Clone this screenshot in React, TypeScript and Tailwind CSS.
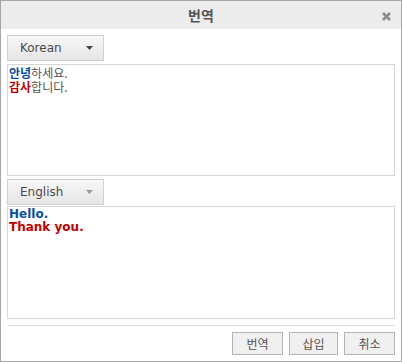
import React from "react";

const font = { fontFamily: '"Noto Sans CJK KR", "Noto Sans", sans-serif' };

function Select({ label, arrow }: { label: string; arrow: string }) {
  return (
    <div className="flex h-[26px] w-[97px] items-center justify-between border border-[#d0d0d0] bg-gradient-to-b from-[#f7f7f7] to-[#e6e6e6] pl-[12px] pr-[10px]">
      <span className="text-[12px] leading-none text-[#4a4a4a]" style={{ fontFamily: '"DejaVu Sans", sans-serif' }}>{label}</span>
      <svg width="7" height="4" viewBox="0 0 7 4">
        <path d="M0 0 H7 L3.5 4 Z" fill={arrow} />
      </svg>
    </div>
  );
}

export default function App() {
  return (
    <div className="flex h-[362px] w-[402px] flex-col border border-[#a6a6a6] bg-white" style={font}>
      <div className="relative flex h-[28px] shrink-0 items-center justify-center bg-[#ececec]">
        <span className="text-[14px] font-bold text-[#555]">번역</span>
        <svg className="absolute right-[10px] top-[11px]" width="9" height="9" viewBox="0 0 9 9">
          <path d="M1 1 L8 8 M8 1 L1 8" stroke="#8a8a8a" strokeWidth="2.6" />
        </svg>
      </div>
      <div className="flex flex-1 flex-col px-[6px] pt-[6px]">
        <Select label="Korean" arrow="#444" />
        <div className="mt-[3px] h-[112px] border border-[#d6d6d6] px-[1px] pt-[1px] text-[12px] leading-[14px] text-[#555]">
          <div><b className="text-[#0a4f9c]">안녕</b>하세요.</div>
          <div><b className="text-[#c00000]">감사</b>합니다.</div>
        </div>
        <div className="mt-[3px]">
          <Select label="English" arrow="#999" />
        </div>
        <div className="mt-[1px] h-[113px] border border-[#d6d6d6] px-[1px] pt-[1px] text-[12px] font-bold leading-[13px]" style={{ fontFamily: '"DejaVu Sans", sans-serif' }}>
          <div className="text-[#0a4f9c]">Hello.</div>
          <div className="text-[#c00000]">Thank you.</div>
        </div>
        <div className="mt-[6px] border-t border-[#dcdcdc]" />
        <div className="mt-[6px] flex justify-end gap-[6px]">
          {["번역", "삽입", "취소"].map((t, i) => (
            <button
              key={t}
              className={`flex h-[23px] items-center justify-center border border-[#b4b4b4] bg-[#f0f0f0] text-[12px] text-[#555] ${i === 1 ? "w-[49px]" : "w-[51px]"}`}
            >
              {t}
            </button>
          ))}
        </div>
      </div>
    </div>
  );
}
